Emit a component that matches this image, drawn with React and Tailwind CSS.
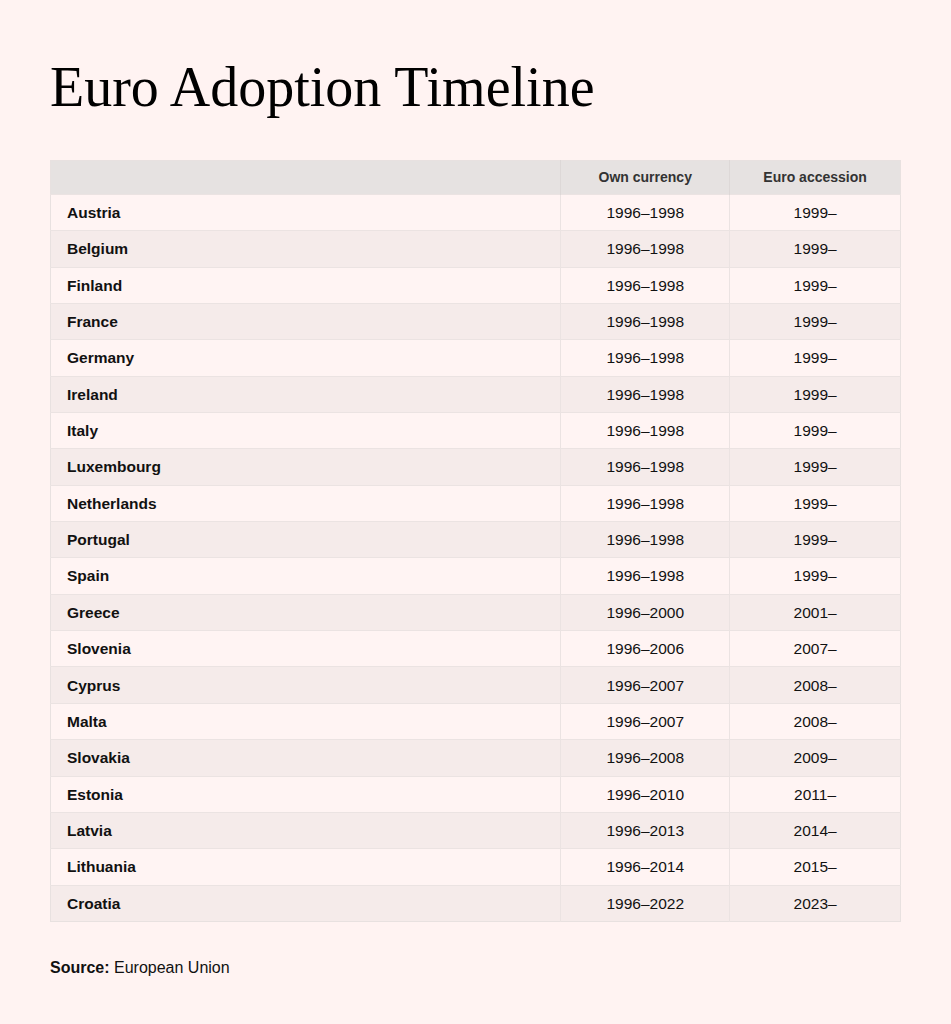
const rows = [
  ["Austria", "1996–1998", "1999–"],
  ["Belgium", "1996–1998", "1999–"],
  ["Finland", "1996–1998", "1999–"],
  ["France", "1996–1998", "1999–"],
  ["Germany", "1996–1998", "1999–"],
  ["Ireland", "1996–1998", "1999–"],
  ["Italy", "1996–1998", "1999–"],
  ["Luxembourg", "1996–1998", "1999–"],
  ["Netherlands", "1996–1998", "1999–"],
  ["Portugal", "1996–1998", "1999–"],
  ["Spain", "1996–1998", "1999–"],
  ["Greece", "1996–2000", "2001–"],
  ["Slovenia", "1996–2006", "2007–"],
  ["Cyprus", "1996–2007", "2008–"],
  ["Malta", "1996–2007", "2008–"],
  ["Slovakia", "1996–2008", "2009–"],
  ["Estonia", "1996–2010", "2011–"],
  ["Latvia", "1996–2013", "2014–"],
  ["Lithuania", "1996–2014", "2015–"],
  ["Croatia", "1996–2022", "2023–"],
];

const App = () => {
  return (
    <div className="min-h-[1024px] bg-[#fff3f2] px-[50px] pt-[55px] font-['Liberation_Sans',Arial,sans-serif] text-[#111]">
      <h1 className="font-['Liberation_Serif','Times_New_Roman',serif] text-[56px] leading-[64px] text-black">
        Euro Adoption Timeline
      </h1>

      <table className="mt-[41px] w-[851px] border-collapse border border-[#e8e1e0] text-[15.5px]">
        <thead>
          <tr className="h-[34px] bg-[#e6e2e1]">
            <th className="w-[511px] border-r border-[#ddd8d7]"></th>
            <th className="w-[169px] border-r border-[#ddd8d7] text-[14px] font-semibold text-[#333]">Own currency</th>
            <th className="w-[171px] text-[14px] font-semibold text-[#333]">Euro accession</th>
          </tr>
        </thead>
        <tbody>
          {rows.map(([country, own, euro], i) => (
            <tr
              key={country}
              className={`h-[36.35px] border-t border-[#ebe3e2] ${i % 2 === 1 ? 'bg-[#f5ebea]' : 'bg-[#fff4f3]'}`}
            >
              <td className="border-r border-[#ebe3e2] px-4 font-bold">{country}</td>
              <td className="border-r border-[#ebe3e2] text-center">{own}</td>
              <td className="text-center">{euro}</td>
            </tr>
          ))}
        </tbody>
      </table>

      <p className="mt-[34px] text-[16px]">
        <span className="font-bold">Source:</span> European Union
      </p>
    </div>
  );
};

export default App;
